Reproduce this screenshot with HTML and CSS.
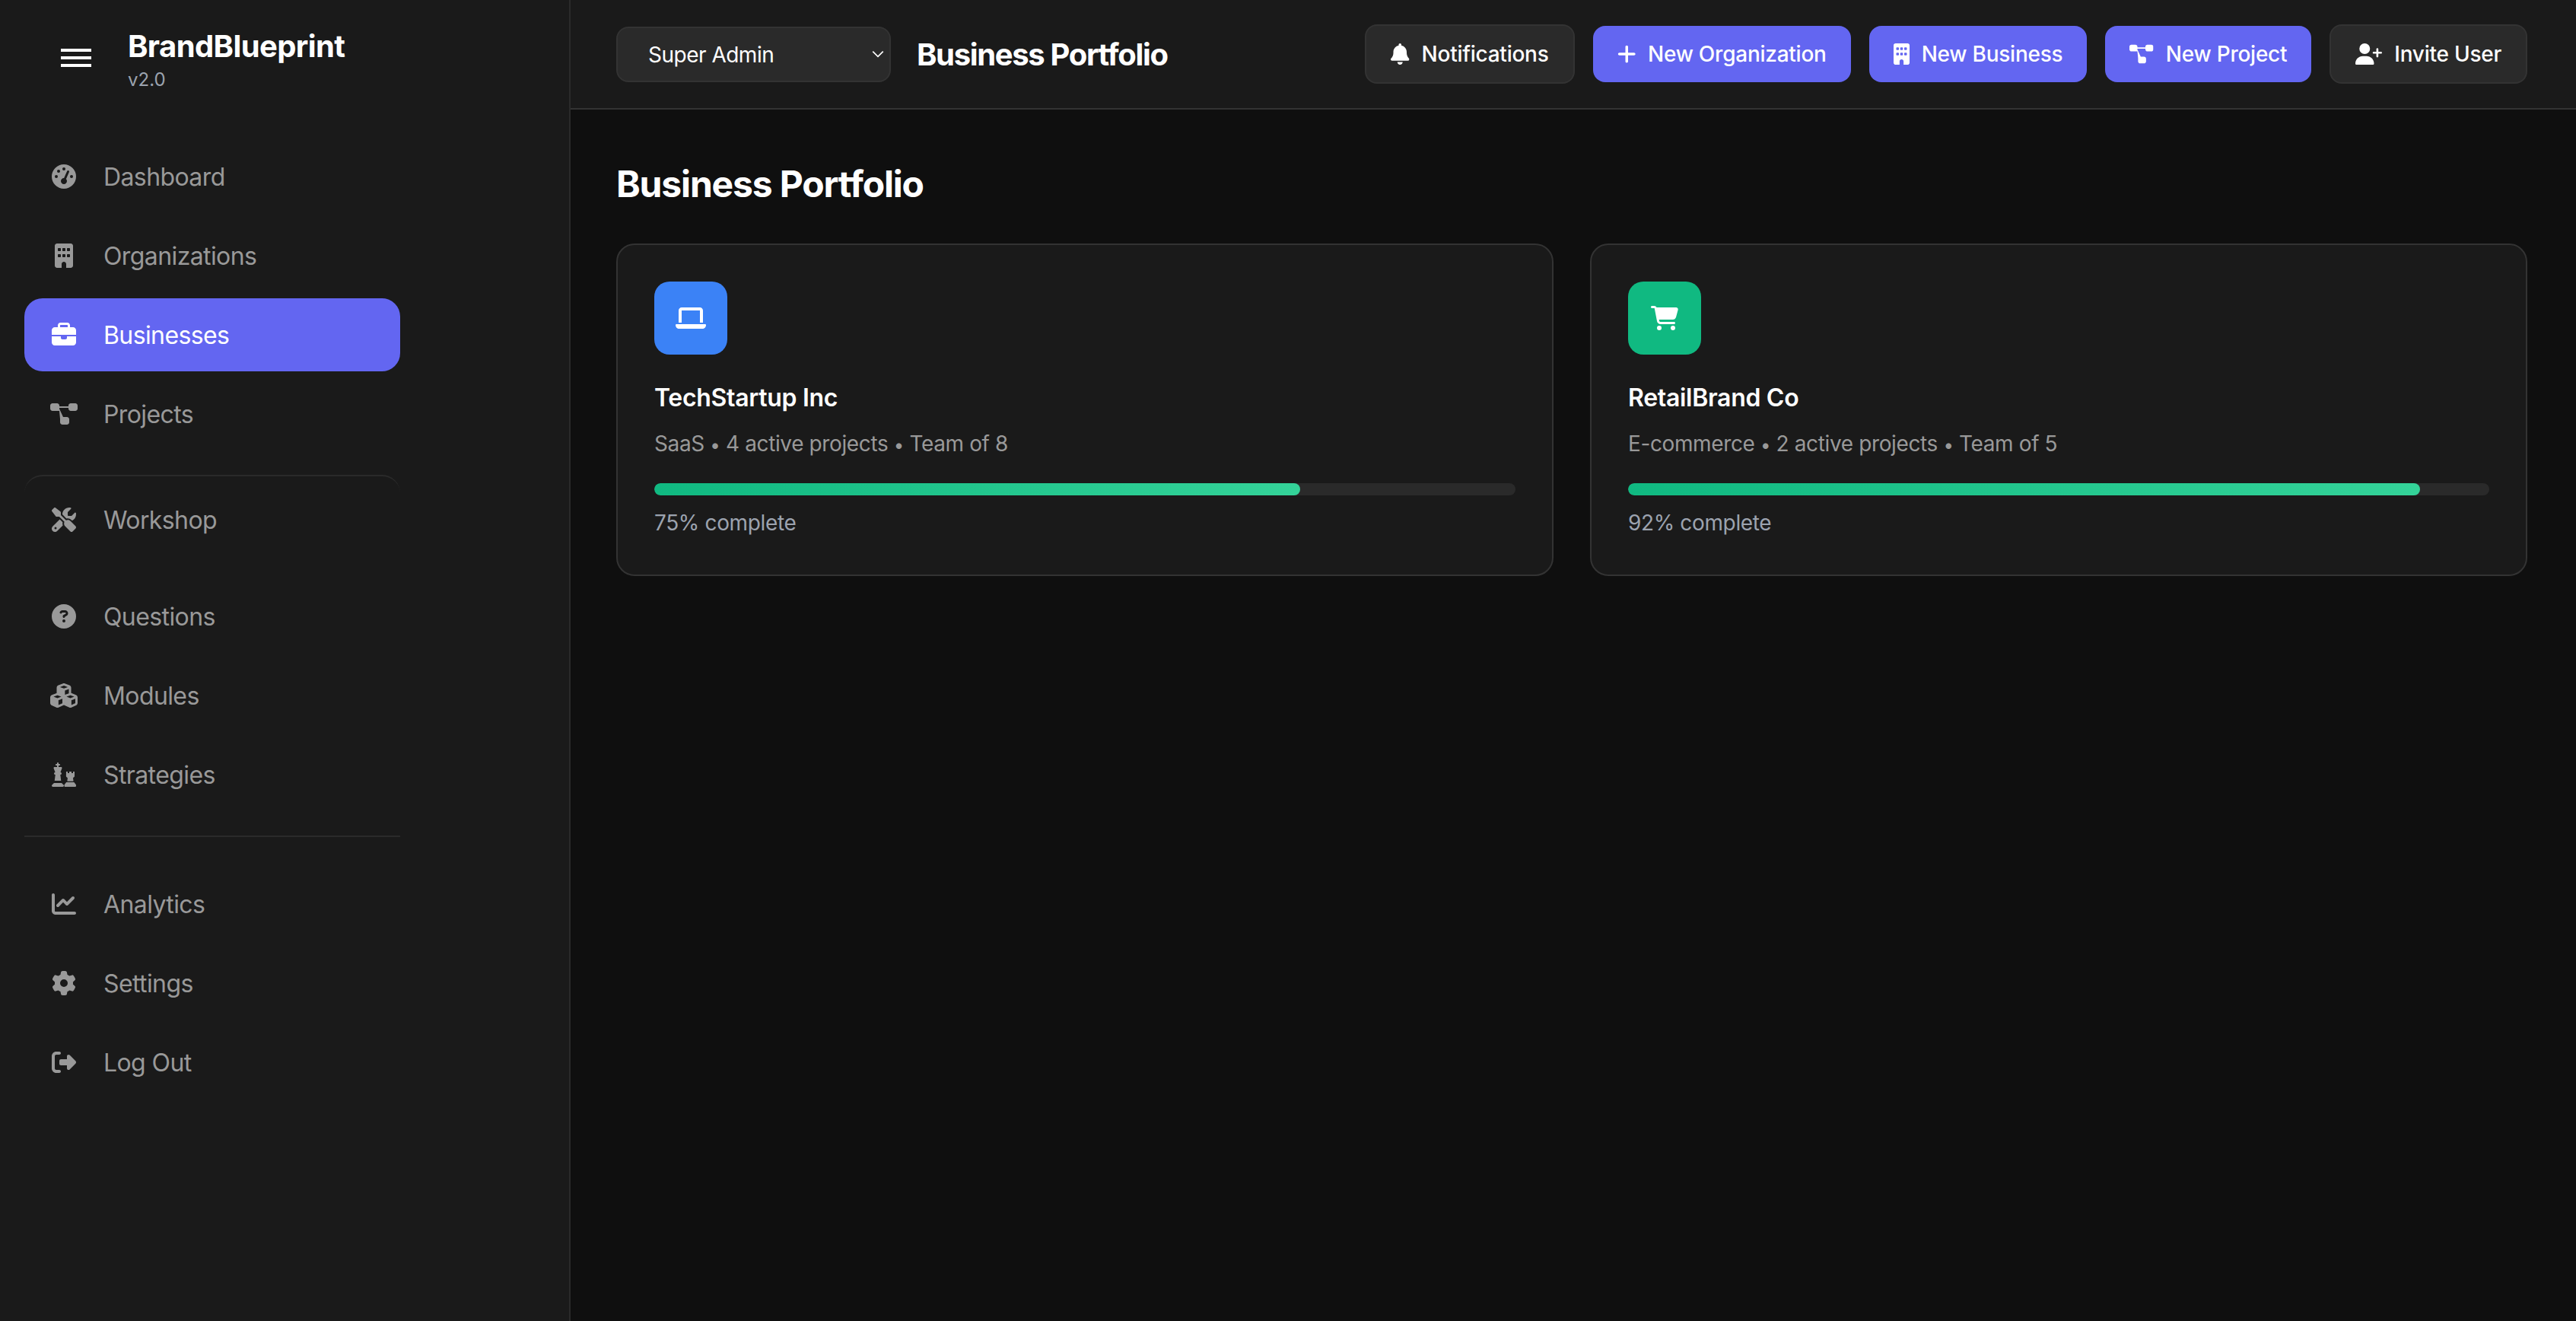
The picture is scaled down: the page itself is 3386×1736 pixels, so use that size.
FILE: index.html
```html
<!DOCTYPE html>
<html lang="en">
<head>
    <meta charset="UTF-8">
    <meta name="viewport" content="width=device-width, initial-scale=1.0">
    <title>BrandBlueprint</title>
    <link rel="stylesheet" href="styles.css">
</head>
<body>
    <!-- Icon sprite -->
    <svg class="sprite" xmlns="http://www.w3.org/2000/svg">
        <symbol id="i-gauge" viewBox="0 0 512 512"><path d="M0 256a256 256 0 1 1 512 0A256 256 0 1 1 0 256zM288 96a32 32 0 1 0 -64 0 32 32 0 1 0 64 0zM256 416c35.3 0 64-28.7 64-64c0-17.4-6.9-33.1-18.1-44.6L366 161.7c5.3-12.1-.2-26.3-12.3-31.6s-26.3 .2-31.6 12.3L257.9 288c-.6 0-1.3 0-1.9 0c-35.3 0-64 28.7-64 64s28.7 64 64 64zM176 144a32 32 0 1 0 -64 0 32 32 0 1 0 64 0zM96 288a32 32 0 1 0 0-64 32 32 0 1 0 0 64zm352-32a32 32 0 1 0 -64 0 32 32 0 1 0 64 0z"/></symbol>
        <symbol id="i-building" viewBox="0 0 384 512"><path d="M48 0C21.5 0 0 21.5 0 48V464c0 26.5 21.5 48 48 48h96V432c0-26.5 21.5-48 48-48s48 21.5 48 48v80h96c26.5 0 48-21.5 48-48V48c0-26.5-21.5-48-48-48H48zM64 240c0-8.8 7.2-16 16-16h32c8.8 0 16 7.2 16 16v32c0 8.8-7.2 16-16 16H80c-8.8 0-16-7.2-16-16V240zm112-16h32c8.8 0 16 7.2 16 16v32c0 8.8-7.2 16-16 16H176c-8.8 0-16-7.2-16-16V240c0-8.8 7.2-16 16-16zm80 16c0-8.8 7.2-16 16-16h32c8.8 0 16 7.2 16 16v32c0 8.8-7.2 16-16 16H272c-8.8 0-16-7.2-16-16V240zM80 96h32c8.8 0 16 7.2 16 16v32c0 8.8-7.2 16-16 16H80c-8.8 0-16-7.2-16-16V112c0-8.8 7.2-16 16-16zm80 16c0-8.8 7.2-16 16-16h32c8.8 0 16 7.2 16 16v32c0 8.8-7.2 16-16 16H176c-8.8 0-16-7.2-16-16V112zM272 96h32c8.8 0 16 7.2 16 16v32c0 8.8-7.2 16-16 16H272c-8.8 0-16-7.2-16-16V112c0-8.8 7.2-16 16-16z"/></symbol>
        <symbol id="i-briefcase" viewBox="0 0 512 512"><path d="M184 48H328c4.4 0 8 3.6 8 8V96H176V56c0-4.4 3.6-8 8-8zm-56 8V96H64C28.7 96 0 124.7 0 160v96H192 320 512V160c0-35.3-28.7-64-64-64H384V56c0-30.9-25.1-56-56-56H184c-30.9 0-56 25.1-56 56zM512 288H320v32c0 17.7-14.3 32-32 32H224c-17.7 0-32-14.3-32-32V288H0V416c0 35.3 28.7 64 64 64H448c35.3 0 64-28.7 64-64V288z"/></symbol>
        <symbol id="i-diagram" viewBox="0 0 576 512"><path d="M0 80C0 53.5 21.5 32 48 32h96c26.5 0 48 21.5 48 48V96H384V80c0-26.5 21.5-48 48-48h96c26.5 0 48 21.5 48 48v64c0 26.5-21.5 48-48 48H432c-26.5 0-48-21.5-48-48V128H192v16c0 1.700-.1 3.400-.3 5L272 320h80c26.5 0 48 21.5 48 48v64c0 26.5-21.5 48-48 48H256c-26.5 0-48-21.5-48-48V368c0-1.700 .1-3.400 .3-5L192 192H48c-26.5 0-48-21.5-48-48V80z"/></symbol>
        <symbol id="i-tools" viewBox="0 0 512 512"><path d="M78.6 5C69.1-2.4 55.6-1.5 47 7L7 47c-8.5 8.5-9.4 22-2.1 31.6l80 104c4.5 5.9 11.6 9.4 19 9.4h54.1l109 109c-14.7 29-10 65.4 14.3 89.6l112 112c12.5 12.5 32.8 12.5 45.3 0l64-64c12.5-12.5 12.5-32.8 0-45.3l-112-112c-24.2-24.2-60.6-29-89.6-14.3l-109-109V104c0-7.5-3.5-14.5-9.4-19L78.6 5zM19.9 396.1C7.2 408.8 0 426.1 0 444.1C0 481.6 30.4 512 67.9 512c18 0 35.3-7.2 48-19.9L233.7 374.3c-7.8-20.9-9-43.6-3.6-65.1l-61.7-61.7L19.9 396.1zM512 144c0-10.5-1.1-20.7-3.2-30.5c-2.4-11.2-16.1-14.1-24.2-6l-63.9 63.9c-3 3-7.1 4.7-11.3 4.7H352c-8.8 0-16-7.2-16-16V102.6c0-4.2 1.7-8.3 4.7-11.3l63.9-63.9c8.1-8.1 5.2-21.8-6-24.2C388.7 1.1 378.5 0 368 0C288.5 0 224 64.5 224 144l0 .8 85.3 85.3c36-9.1 75.8 .5 104 28.7L429 274.5c49-23 83-72.8 83-130.5zM56 432a24 24 0 1 1 48 0 24 24 0 1 1 -48 0z"/></symbol>
        <symbol id="i-question" viewBox="0 0 512 512"><path d="M256 512A256 256 0 1 0 256 0a256 256 0 1 0 0 512zM169.8 165.3c7.9-22.3 29.1-37.3 52.8-37.3h58.3c34.9 0 63.1 28.3 63.1 63.1c0 22.6-12.1 43.5-31.7 54.8L280 264.4c-.2 13-10.9 23.6-24 23.6c-13.3 0-24-10.7-24-24V250.5c0-8.6 4.6-16.5 12.1-20.8l44.3-25.4c4.7-2.7 7.6-7.7 7.6-13.1c0-8.4-6.8-15.1-15.1-15.1H222.6c-3.4 0-6.4 2.1-7.5 5.3l-.4 1.2c-4.4 12.5-18.2 19-30.6 14.6s-19-18.2-14.6-30.6l.4-1.2zM224 352a32 32 0 1 1 64 0 32 32 0 1 1 -64 0z"/></symbol>
        <symbol id="i-cubes" viewBox="0 0 576 512"><path d="M290.8 48.6l78.4 29.7L288 109.5 206.8 78.3l78.4-29.7c1.8-.7 3.8-.7 5.7 0zM136 92.5V204.7c-1.3 .4-2.6 .8-3.9 1.3l-96 36.4C14.4 250.6 0 271.5 0 294.7V413.9c0 22.2 13.1 42.3 33.5 51.3l96 42.2c14.4 6.3 30.7 6.3 45.1 0L288 457.5l113.5 49.9c14.4 6.3 30.7 6.3 45.1 0l96-42.2c20.3-8.9 33.5-29.1 33.5-51.3V294.7c0-23.3-14.4-44.1-36.1-52.4l-96-36.4c-1.3-.5-2.6-.9-3.9-1.3V92.5c0-23.3-14.4-44.1-36.1-52.4l-96-36.4c-12.8-4.8-26.9-4.8-39.7 0l-96 36.4C150.4 48.4 136 69.3 136 92.5zM392 210.6l-82.4 31.2V152.6L392 121v89.6zM154.8 250.9l78.4 29.7L152 311.7 70.8 280.6l78.4-29.7c1.8-.7 3.8-.7 5.7 0zm18.8 204.4V354.8L256 323.2v95.9l-82.4 36.2zM421.2 250.9c1.8-.7 3.8-.7 5.7 0l78.4 29.7L424 311.7l-81.2-31.1 78.4-29.7zM523.2 421.2l-77.6 34.1V354.8L528 323.2v90.7c0 3.2-1.9 6-4.8 7.3z"/></symbol>
        <symbol id="i-chess" viewBox="0 0 512 512"><path d="M144 16c0-8.800-7.200-16-16-16s-16 7.200-16 16V32H96c-8.800 0-16 7.200-16 16s7.200 16 16 16h16V96H60.200C49.100 96 40 105.100 40 116.200c0 2.500 .5 4.900 1.300 7.300L73.800 208H72c-13.300 0-24 10.700-24 24s10.700 24 24 24h4L60 384H196L180 256h4c13.300 0 24-10.700 24-24s-10.700-24-24-24h-1.800l32.500-84.500c.9-2.300 1.300-4.800 1.300-7.300c0-11.200-9.100-20.200-20.200-20.200H144V64h16c8.800 0 16-7.200 16-16s-7.200-16-16-16H144V16zM48 432L6.600 473.400c-4.200 4.200-6.600 10-6.600 16C0 501.900 10.100 512 22.600 512H233.400c12.500 0 22.600-10.100 22.600-22.600c0-6-2.400-11.800-6.600-16L208 432H48zM304 192h32v32h32v-32h48v32h32v-32h32v96c0 8-4 14-12 20l-20 14 8 74H326l8-74-20-14c-8-6-12-12-12-20zM306 416l-34 42c-5 6-8 13-8 21v12c0 12 9 21 21 21h206c12 0 21-9 21-21v-12c0-8-3-15-8-21l-34-42z"/></symbol>
        <symbol id="i-chart" viewBox="0 0 512 512"><path d="M64 64c0-17.700-14.300-32-32-32S0 46.300 0 64V400c0 44.200 35.800 80 80 80H480c17.700 0 32-14.300 32-32s-14.300-32-32-32H80c-8.800 0-16-7.200-16-16V64zm406.600 86.600c12.500-12.500 12.500-32.800 0-45.300s-32.800-12.500-45.300 0L320 210.700l-57.400-57.400c-12.500-12.500-32.800-12.500-45.300 0l-112 112c-12.500 12.500-12.500 32.800 0 45.300s32.800 12.500 45.300 0L240 221.300l57.400 57.400c12.500 12.500 32.800 12.500 45.300 0l128-128z"/></symbol>
        <symbol id="i-gear" viewBox="0 0 512 512"><path d="M495.900 166.600c3.200 8.700 .5 18.400-6.400 24.600l-43.300 39.400c1.100 8.300 1.700 16.800 1.700 25.400s-.6 17.100-1.700 25.400l43.300 39.400c6.900 6.200 9.600 15.900 6.400 24.600c-4.400 11.900-9.700 23.300-15.800 34.300l-4.700 8.100c-6.600 11-14 21.400-22.100 31.200c-5.900 7.200-15.700 9.600-24.500 6.800l-55.700-17.700c-13.400 10.300-28.200 18.900-44 25.400l-12.500 57.100c-2 9.100-9 16.300-18.200 17.800c-13.800 2.300-28 3.500-42.500 3.500s-28.700-1.200-42.500-3.500c-9.200-1.500-16.200-8.700-18.200-17.800l-12.500-57.100c-15.800-6.500-30.600-15.100-44-25.400L83.100 425.900c-8.800 2.800-18.600 .3-24.500-6.800c-8.100-9.800-15.500-20.200-22.100-31.200l-4.700-8.100c-6.100-11-11.400-22.400-15.800-34.300c-3.200-8.700-.5-18.400 6.400-24.600l43.300-39.400C64.600 273.100 64 264.600 64 256s.6-17.100 1.700-25.400L22.400 191.200c-6.900-6.200-9.600-15.900-6.400-24.600c4.400-11.900 9.700-23.300 15.800-34.300l4.700-8.100c6.600-11 14-21.400 22.100-31.200c5.900-7.200 15.700-9.600 24.500-6.800l55.700 17.700c13.400-10.300 28.200-18.900 44-25.400l12.500-57.100c2-9.100 9-16.300 18.200-17.800C227.300 1.200 241.500 0 256 0s28.700 1.200 42.500 3.500c9.200 1.500 16.200 8.700 18.200 17.800l12.500 57.100c15.800 6.500 30.600 15.100 44 25.400l55.700-17.700c8.800-2.800 18.600-.3 24.500 6.800c8.100 9.800 15.500 20.200 22.100 31.200l4.700 8.100c6.100 11 11.400 22.400 15.800 34.300zM256 336a80 80 0 1 0 0-160 80 80 0 1 0 0 160z"/></symbol>
        <symbol id="i-logout" viewBox="0 0 512 512"><path d="M377.900 105.900L500.700 228.700c7.200 7.200 11.300 17.100 11.300 27.300s-4.100 20.100-11.300 27.300L377.900 406.100c-6.400 6.400-15 9.900-24 9.900c-18.700 0-33.900-15.200-33.900-33.900l0-62.100-128 0c-17.700 0-32-14.300-32-32l0-64c0-17.700 14.300-32 32-32l128 0 0-62.100c0-18.700 15.200-33.900 33.900-33.900c9 0 17.600 3.600 24 9.900zM160 96L96 96c-17.700 0-32 14.300-32 32l0 256c0 17.700 14.300 32 32 32l64 0c17.700 0 32 14.300 32 32s-14.300 32-32 32l-64 0c-53 0-96-43-96-96L0 128C0 75 43 32 96 32l64 0c17.700 0 32 14.300 32 32s-14.300 32-32 32z"/></symbol>
        <symbol id="i-bell" viewBox="0 0 448 512"><path d="M224 0c-17.700 0-32 14.300-32 32V51.200C119 66 64 130.600 64 208v18.800c0 47-17.300 92.400-48.500 127.600l-7.400 8.300c-8.400 9.400-10.400 22.900-5.300 34.400S19.400 416 32 416H416c12.600 0 24-7.400 29.200-18.900s3.100-25-5.300-34.400l-7.400-8.300C401.300 319.200 384 273.900 384 226.800V208c0-77.400-55-142-128-156.800V32c0-17.700-14.300-32-32-32zm45.300 493.300c12-12 18.700-28.300 18.700-45.300H224 160c0 17 6.700 33.300 18.700 45.300s28.300 18.700 45.300 18.700s33.300-6.700 45.300-18.700z"/></symbol>
        <symbol id="i-plus" viewBox="0 0 448 512"><path d="M256 80c0-17.700-14.300-32-32-32s-32 14.300-32 32V224H48c-17.700 0-32 14.300-32 32s14.300 32 32 32H192V432c0 17.700 14.300 32 32 32s32-14.300 32-32V288H400c17.700 0 32-14.300 32-32s-14.300-32-32-32H256V80z"/></symbol>
        <symbol id="i-user-plus" viewBox="0 0 640 512"><path d="M96 128a128 128 0 1 1 256 0A128 128 0 1 1 96 128zM0 482.300C0 383.800 79.800 304 178.300 304h91.400C368.200 304 448 383.800 448 482.300c0 16.400-13.300 29.700-29.700 29.700H29.700C13.300 512 0 498.700 0 482.300zM504 312V248H440c-13.300 0-24-10.700-24-24s10.700-24 24-24h64V136c0-13.300 10.700-24 24-24s24 10.700 24 24v64h64c13.300 0 24 10.700 24 24s-10.700 24-24 24H552v64c0 13.300-10.700 24-24 24s-24-10.700-24-24z"/></symbol>
        <symbol id="i-laptop" viewBox="0 0 640 512"><path d="M128 32C92.700 32 64 60.700 64 96V352h64V96H512V352h64V96c0-35.300-28.700-64-64-64H128zM19.200 384C8.600 384 0 392.600 0 403.200C0 445.600 34.400 480 76.800 480H563.200c42.400 0 76.800-34.400 76.800-76.800c0-10.600-8.600-19.200-19.200-19.200H19.200z"/></symbol>
        <symbol id="i-cart" viewBox="0 0 576 512"><path d="M0 24C0 10.700 10.700 0 24 0H69.500c22 0 41.500 12.800 50.600 32h411c26.300 0 45.500 25 38.600 50.400l-41 152.300c-8.500 31.400-37 53.300-69.500 53.300H170.700l5.400 28.500c2.200 11.300 12.100 19.500 23.600 19.500H488c13.300 0 24 10.700 24 24s-10.700 24-24 24H199.700c-34.600 0-64.300-24.600-70.700-58.500L77.400 54.500c-.7-3.800-4-6.500-7.900-6.500H24C10.700 48 0 37.300 0 24zM128 464a48 48 0 1 1 96 0 48 48 0 1 1 -96 0zm336-48a48 48 0 1 1 0 96 48 48 0 1 1 0-96z"/></symbol>
    </svg>

    <div class="app">
        <aside class="sidebar">
            <div class="brand">
                <div class="menu-toggle"><span></span><span></span><span></span></div>
                <div class="brand-text">
                    <div class="brand-name">BrandBlueprint</div>
                    <div class="brand-version">v2.0</div>
                </div>
            </div>
            <nav class="nav">
                <a class="nav-item"><span class="nav-icon"><svg><use href="#i-gauge"/></svg></span><span class="nav-label">Dashboard</span></a>
                <a class="nav-item"><span class="nav-icon"><svg><use href="#i-building"/></svg></span><span class="nav-label">Organizations</span></a>
                <a class="nav-item active"><span class="nav-icon"><svg><use href="#i-briefcase"/></svg></span><span class="nav-label">Businesses</span></a>
                <a class="nav-item"><span class="nav-icon"><svg><use href="#i-diagram"/></svg></span><span class="nav-label">Projects</span></a>
                <a class="nav-item workshop"><span class="nav-icon"><svg><use href="#i-tools"/></svg></span><span class="nav-label">Workshop</span></a>
                <a class="nav-item"><span class="nav-icon"><svg><use href="#i-question"/></svg></span><span class="nav-label">Questions</span></a>
                <a class="nav-item"><span class="nav-icon"><svg><use href="#i-cubes"/></svg></span><span class="nav-label">Modules</span></a>
                <a class="nav-item"><span class="nav-icon"><svg><use href="#i-chess"/></svg></span><span class="nav-label">Strategies</span></a>
                <div class="nav-divider"></div>
                <a class="nav-item"><span class="nav-icon"><svg><use href="#i-chart"/></svg></span><span class="nav-label">Analytics</span></a>
                <a class="nav-item"><span class="nav-icon"><svg><use href="#i-gear"/></svg></span><span class="nav-label">Settings</span></a>
                <a class="nav-item"><span class="nav-icon"><svg><use href="#i-logout"/></svg></span><span class="nav-label">Log Out</span></a>
            </nav>
        </aside>

        <div class="main">
            <header class="topbar">
                <div class="topbar-left">
                    <div class="role-select">
                        <select>
                            <option>Super Admin</option>
                        </select>
                        <svg class="role-arrow" viewBox="0 0 16 16"><path d="M2 5l6 6 6-6" fill="none" stroke="currentColor" stroke-width="1.500"/></svg>
                    </div>
                    <div class="page-title">Business Portfolio</div>
                </div>
                <div class="topbar-actions">
                    <button class="btn"><svg class="btn-icon"><use href="#i-bell"/></svg>Notifications</button>
                    <button class="btn primary"><svg class="btn-icon"><use href="#i-plus"/></svg>New Organization</button>
                    <button class="btn primary"><svg class="btn-icon narrow"><use href="#i-building"/></svg>New Business</button>
                    <button class="btn primary"><svg class="btn-icon wide"><use href="#i-diagram"/></svg>New Project</button>
                    <button class="btn"><svg class="btn-icon wider"><use href="#i-user-plus"/></svg>Invite User</button>
                </div>
            </header>

            <main class="content">
                <h1>Business Portfolio</h1>
                <div class="cards">
                    <div class="card">
                        <div class="card-icon blue"><svg class="laptop"><use href="#i-laptop"/></svg></div>
                        <h3>TechStartup Inc</h3>
                        <p class="card-meta">SaaS <span class="dot">•</span> 4 active projects <span class="dot">•</span> Team of 8</p>
                        <div class="progress"><div class="progress-fill" style="width: 75%"></div></div>
                        <div class="progress-label">75% complete</div>
                    </div>
                    <div class="card">
                        <div class="card-icon green"><svg class="cart"><use href="#i-cart"/></svg></div>
                        <h3>RetailBrand Co</h3>
                        <p class="card-meta">E-commerce <span class="dot">•</span> 2 active projects <span class="dot">•</span> Team of 5</p>
                        <div class="progress"><div class="progress-fill" style="width: 92%"></div></div>
                        <div class="progress-label">92% complete</div>
                    </div>
                </div>
            </main>
        </div>
    </div>
</body>
</html>
```

FILE: styles.css
```css
* {
    margin: 0;
    padding: 0;
    box-sizing: border-box;
}
body {
    font-family: 'Inter', 'Liberation Sans', sans-serif;
    background-color: #0f0f0f;
    color: #ffffff;
    height: 100vh;
    overflow: hidden;
}
.sprite {
    display: none;
}
svg {
    fill: currentColor;
}
.app {
    display: flex;
    height: 100vh;
}

/* Sidebar */
.sidebar {
    width: 750px;
    flex-shrink: 0;
    background-color: #1a1a1a;
    border-right: 2px solid #2a2a2a;
    padding: 32px 0 0 32px;
}
.brand {
    display: flex;
    align-items: center;
    gap: 48px;
    height: 88px;
    padding-left: 48px;
}
.menu-toggle {
    width: 40px;
    display: flex;
    flex-direction: column;
    gap: 6px;
}
.menu-toggle span {
    height: 4px;
    background-color: #ffffff;
}
.brand-text {
    padding-top: 5px;
}
.brand-name {
    font-size: 40px;
    line-height: 48px;
    font-weight: 700;
    letter-spacing: -0.6px;
}
.brand-version {
    margin-top: 5px;
    font-size: 24px;
    line-height: 30px;
    color: #9ca3af;
}
.nav {
    width: 494px;
    margin-top: 64px;
    display: flex;
    flex-direction: column;
    gap: 8px;
}
.nav-item {
    display: flex;
    align-items: center;
    gap: 32px;
    padding: 24px 32px;
    height: 96px;
    border-radius: 24px;
    font-size: 32px;
    line-height: 48px;
    letter-spacing: -0.6px;
    color: #999999;
}
.nav-item.active {
    background-color: #6366f1;
    color: #ffffff;
}
.nav-item.workshop {
    height: 106px;
    margin: 24px 0;
    padding-top: 34px;
    border-top: 2px solid #2a2a2a;
}
.nav-icon {
    width: 40px;
    height: 32px;
    display: flex;
    justify-content: center;
}
.nav-icon svg {
    width: 40px;
    height: 32px;
}
.nav-label {
    padding-top: 2px;
}
.nav-divider {
    height: 2px;
    margin: 24px 0 32px;
    background-color: #2a2a2a;
}

/* Main area */
.main {
    flex: 1;
    min-width: 0;
}
.topbar {
    height: 144px;
    display: flex;
    align-items: center;
    justify-content: space-between;
    padding: 0 64px 0 60px;
    background-color: #1a1a1a;
    border-bottom: 2px solid #333333;
}
.topbar-left {
    display: flex;
    align-items: center;
    gap: 34px;
}
.role-select {
    position: relative;
    width: 361px;
    height: 73px;
}
.role-select select {
    width: 100%;
    height: 100%;
    appearance: none;
    padding: 2px 40px 0;
    background-color: #2a2a2a;
    border: 2px solid #333333;
    border-radius: 16px;
    color: #ffffff;
    font-family: inherit;
    font-size: 28px;
    letter-spacing: -0.5px;
}
.role-arrow {
    position: absolute;
    right: 8px;
    top: 27px;
    width: 18px;
    height: 18px;
    color: #ffffff;
    pointer-events: none;
}
.page-title {
    padding-top: 2px;
    font-size: 40px;
    line-height: 48px;
    font-weight: 700;
    letter-spacing: -1.350px;
}
.topbar-actions {
    display: flex;
    align-items: center;
    gap: 24px;
}
.btn {
    display: flex;
    align-items: center;
    gap: 16px;
    padding: 20px 32px;
    background-color: #2a2a2a;
    border: 2px solid #333333;
    border-radius: 16px;
    color: #ffffff;
    font-family: inherit;
    font-size: 28px;
    font-weight: 500;
    line-height: 34px;
    letter-spacing: -0.250px;
}
.btn.primary {
    background-color: #6366f1;
    border: none;
}
.btn-icon {
    width: 24.500px;
    height: 28px;
}
.btn-icon.narrow {
    width: 21px;
}
.btn-icon.wide {
    width: 31.500px;
}
.btn-icon.wider {
    width: 35px;
}

/* Content */
.content {
    padding: 60px 64px 0 60px;
}
h1 {
    font-size: 48px;
    line-height: 76px;
    font-weight: 700;
    letter-spacing: -1.160px;
    margin-bottom: 40px;
}
.cards {
    display: grid;
    grid-template-columns: 1fr 1fr;
    gap: 48px;
}
.card {
    height: 437px;
    padding: 48px;
    background-color: #1a1a1a;
    border: 2px solid #333333;
    border-radius: 24px;
}
.card-icon {
    width: 96px;
    height: 96px;
    border-radius: 20px;
    display: flex;
    align-items: center;
    justify-content: center;
    margin-bottom: 32px;
}
.card-icon.blue {
    background-color: #3b82f6;
}
.card-icon.green {
    background-color: #10b981;
}
.card-icon svg.laptop {
    width: 40px;
    height: 32px;
}
.card-icon svg.cart {
    width: 36px;
    height: 32px;
}
h3 {
    font-size: 32px;
    line-height: 50px;
    font-weight: 600;
    letter-spacing: -0.3px;
    margin-bottom: 13px;
}
.card-meta {
    font-size: 28px;
    line-height: 45px;
    letter-spacing: -0.38px;
    color: #999999;
    margin-bottom: 28px;
}
.dot {
    font-size: 24px;
}
.progress {
    height: 16px;
    border-radius: 8px;
    background-color: #2a2a2a;
    overflow: hidden;
}
.progress-fill {
    height: 100%;
    border-radius: 8px;
    background: linear-gradient(90deg, #10b981, #34d399);
}
.progress-label {
    margin-top: 14px;
    font-size: 28px;
    line-height: 45px;
    letter-spacing: -0.36px;
    color: #9ca3af;
}
```
